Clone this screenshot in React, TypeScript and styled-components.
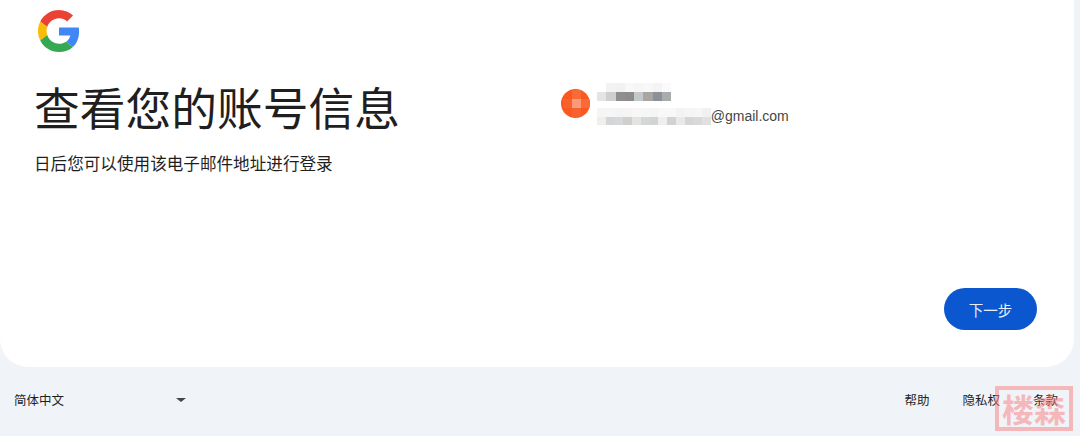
import styled, { createGlobalStyle } from 'styled-components'

const GlobalStyle = createGlobalStyle`
  html, body {
    margin: 0;
    height: 100%;
    background: #f0f4f9;
    overflow: hidden;
  }
  body {
    font-family: "Liberation Sans", "Noto Sans CJK SC", sans-serif;
    color: #1f1f1f;
  }
`

const Page = styled.div`
  position: relative;
  width: 1080px;
  height: 436px;
  display: flex;
  flex-direction: column;
`
const Card = styled.main`
  width: 1074px;
  height: 367px;
  box-sizing: border-box;
  flex: none;
  background: #fff;
  border-radius: 0 0 28px 28px;
  padding: 10px 37px 37px 34px;
  display: flex;
  flex-direction: column;
`
const Logo = styled.svg`
  display: block;
  width: 42px;
  height: 42px;
  margin-left: 4px;
`
const Columns = styled.div`
  display: flex;
  align-items: flex-start;
  margin-top: 22px;
`
const Intro = styled.div`
  width: 527px;
  flex: none;
`
const Title = styled.h1`
  margin: 0;
  font-size: 45.75px;
  line-height: 64px;
  font-weight: 400;
  color: #1f1f1f;
  font-family: "Noto Sans CJK SC", sans-serif;
`
const Subtitle = styled.p`
  margin: 13px 0 0;
  font-size: 16.6px;
  line-height: 24px;
  color: #1f1f1f;
  font-family: "Noto Sans CJK SC", sans-serif;
`
const Account = styled.div`
  display: flex;
  align-items: flex-start;
  gap: 7px;
  margin-top: 9px;
`
const Avatar = styled.div`
  position: relative;
  width: 29px;
  height: 29px;
  border-radius: 50%;
  background: #f9591f;
  overflow: hidden;
  margin-top: 6px;
`
const AvatarPatch = styled.div<{ $x: number; $y: number; $color: string }>`
  position: absolute;
  left: ${({ $x }) => $x}px;
  top: ${({ $y }) => $y}px;
  width: 9px;
  height: 9px;
  background: ${({ $color }) => $color};
`
const AccountText = styled.div`
  display: flex;
  flex-direction: column;
  gap: 7px;
`
const Mosaic = styled.div`
  display: flex;
  flex-direction: column;
`
const MosaicRow = styled.div`
  display: flex;
`
const MosaicCell = styled.div<{ $color: string; $width: number; $height: number }>`
  width: ${({ $width }) => $width}px;
  height: ${({ $height }) => $height}px;
  background: ${({ $color }) => $color};
`
const EmailRow = styled.div`
  display: flex;
  align-items: flex-start;
  font-size: 14px;
  line-height: 16px;
  color: #444746;
`
const Actions = styled.div`
  margin-top: auto;
  display: flex;
  justify-content: flex-end;
`
const NextButton = styled.button`
  width: 93px;
  height: 42px;
  border: 0;
  border-radius: 21px;
  background: #0b57d0;
  color: #e8eefb;
  font-size: 14.5px;
  font-family: "Noto Sans CJK SC", sans-serif;
  padding: 0;
`
const Footer = styled.footer`
  flex: 1;
  display: flex;
  align-items: center;
  justify-content: space-between;
  padding: 0 22px 4px 14px;
  font-size: 12.5px;
  color: #1f1f1f;
  font-family: "Noto Sans CJK SC", sans-serif;
`
const Language = styled.div`
  width: 172px;
  display: flex;
  align-items: center;
  justify-content: space-between;
`
const Caret = styled.span`
  width: 0;
  height: 0;
  border-left: 5px solid transparent;
  border-right: 5px solid transparent;
  border-top: 4px solid #444746;
`
const FooterLinks = styled.nav`
  display: flex;
  gap: 33px;
`
const Stamp = styled.div`
  position: absolute;
  left: 995px;
  top: 386px;
  width: 78px;
  height: 45px;
  box-sizing: border-box;
  border: 4px solid rgba(248, 124, 125, 0.5);
  color: rgba(248, 124, 125, 0.5);
  font-size: 32px;
  line-height: 36px;
  text-align: center;
  overflow: hidden;
  white-space: nowrap;
  font-family: "Noto Sans CJK SC", sans-serif;
  font-weight: 700;
`

const nameCells = [
  ['#ffffff', '#f3f3f3', '#f1f1f1', '#f8f8f8', '#f6f6f6', '#f8f8f8', '#f4f4f4', '#fafafa'],
  ['#e6e4e2', '#cfcfcf', '#8f8f8f', '#8c8c8c', '#c3c8cb', '#a9a6a1', '#8d9096', '#a9abad'],
]
const mailCells = [
  ['#f5f5f3', '#f6f6f6', '#f4f4f4', '#f5f5f5', '#f7f7f7', '#f6f6f6', '#f5f5f5', '#f8f8f8', '#f8f8f8', '#f3f3f3', '#f5f5f5', '#f6f6f6', '#f1f1f1'],
  ['#f1efec', '#d3d6d8', '#d7d8d9', '#d0cfcd', '#e3e3e1', '#d5d6d6', '#d2d3d4', '#eeeeee', '#d0d2d4', '#e9e9e8', '#d5d6d7', '#d9d9d8', '#e0e0de'],
]

export default function App() {
  return (
    <Page>
      <GlobalStyle />
      <Card>
        <Logo viewBox="0 0 48 48" aria-label="Google">
          <path fill="#EA4335" d="M24 9.5c3.54 0 6.71 1.22 9.21 3.6l6.85-6.85C35.9 2.38 30.47 0 24 0 14.62 0 6.51 5.38 2.56 13.22l7.98 6.19C12.43 13.72 17.74 9.5 24 9.5z" />
          <path fill="#4285F4" d="M46.98 24.55c0-1.57-.15-3.09-.38-4.55H24v9.02h12.94c-.58 2.96-2.26 5.48-4.78 7.18l7.73 6c4.51-4.18 7.09-10.36 7.09-17.65z" />
          <path fill="#FBBC05" d="M10.53 28.59c-.48-1.45-.76-2.99-.76-4.59s.27-3.14.76-4.59l-7.98-6.19C.92 16.46 0 20.12 0 24c0 3.88.92 7.54 2.56 10.78l7.97-6.19z" />
          <path fill="#34A853" d="M24 48c6.48 0 11.93-2.13 15.89-5.81l-7.73-6c-2.15 1.45-4.92 2.3-8.16 2.3-6.26 0-11.57-4.22-13.47-9.91l-7.98 6.19C6.51 42.62 14.62 48 24 48z" />
        </Logo>
        <Columns>
          <Intro>
            <Title>查看您的账号信息</Title>
            <Subtitle>日后您可以使用该电子邮件地址进行登录</Subtitle>
          </Intro>
          <Account>
            <Avatar>
              <AvatarPatch $x={2} $y={10} $color="#f9602b" />
              <AvatarPatch $x={11} $y={1} $color="#fa6a38" />
              <AvatarPatch $x={11} $y={19} $color="#f76130" />
              <AvatarPatch $x={20} $y={10} $color="#fa6a38" />
              <AvatarPatch $x={11} $y={10} $color="#fc9a78" />
            </Avatar>
            <AccountText>
              <Mosaic>
                {nameCells.map((row, i) => (
                  <MosaicRow key={i}>
                    {row.map((color, j) => (
                      <MosaicCell key={j} $color={color} $width={9.25} $height={9} />
                    ))}
                  </MosaicRow>
                ))}
              </Mosaic>
              <EmailRow>
                <Mosaic>
                  {mailCells.map((row, i) => (
                    <MosaicRow key={i}>
                      {row.map((color, j) => (
                        <MosaicCell key={j} $color={color} $width={8.75} $height={8.5} />
                      ))}
                    </MosaicRow>
                  ))}
                </Mosaic>
                @gmail.com
              </EmailRow>
            </AccountText>
          </Account>
        </Columns>
        <Actions>
          <NextButton>下一步</NextButton>
        </Actions>
      </Card>
      <Footer>
        <Language>
          简体中文
          <Caret />
        </Language>
        <FooterLinks>
          <span>帮助</span>
          <span>隐私权</span>
          <span>条款</span>
        </FooterLinks>
      </Footer>
      <Stamp>楼森</Stamp>
    </Page>
  )
}
